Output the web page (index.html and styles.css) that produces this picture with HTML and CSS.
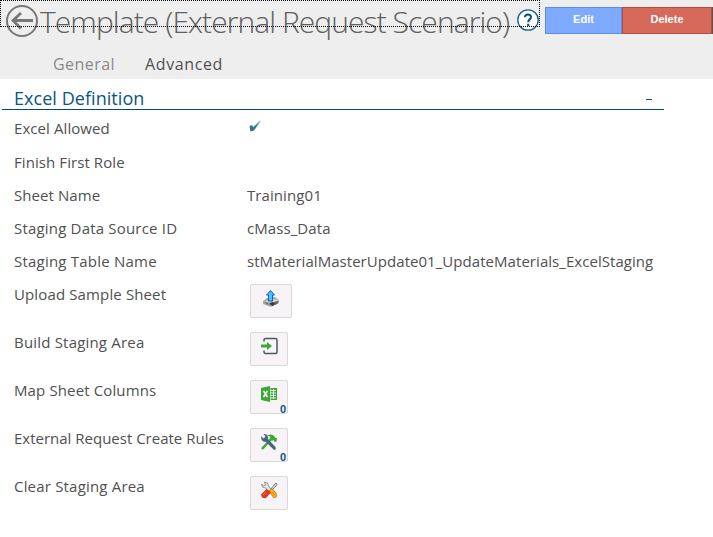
FILE: index.html
```html
<!DOCTYPE html>
<html lang="en">
<head>
<meta charset="utf-8">
<title>Template (External Request Scenario)</title>
<link rel="stylesheet" href="styles.css">
</head>
<body>
<header class="header">
  <div class="topbar">
    <svg class="back" viewBox="0 0 34 34"><circle cx="17" cy="17" r="15" fill="none" stroke="#777" stroke-width="2"/><path d="M28 16.500H8M16 9L8 16.500l8 8" fill="none" stroke="#777" stroke-width="2.8"/></svg>
    <h1 class="title">Template (External Request Scenario)</h1>
    <svg class="help" viewBox="0 0 22 22"><circle cx="11" cy="11" r="10.2" fill="#fff" stroke="#16648c" stroke-width="1.3"/><path d="M8 8.3C8 4.6 14 4.7 14 8.1C14 10.3 11.2 10.5 11.2 13.2M11.2 14.8v2.1" fill="none" stroke="#0b5580" stroke-width="2.1"/></svg>
    <div class="actions"><button class="btn edit">Edit</button><button class="btn delete">Delete</button></div>
    <div class="focus"></div>
  </div>
  <nav class="tabs"><a class="general">General</a><a class="active">Advanced</a></nav>
</header>
<main>
  <div class="section"><h2>Excel Definition</h2><i class="collapse"></i></div>
  <div class="rows">
    <div class="row first"><span class="l1">Excel Allowed</span><svg class="check" viewBox="0 0 12 12"><defs><linearGradient id="ck" x1="0" y1="1" x2="1" y2="0"><stop offset="0" stop-color="#20617f"/><stop offset=".5" stop-color="#4385a1"/><stop offset="1" stop-color="#b9d5ef"/></linearGradient></defs><path d="M.5 6l2.500-1 1.200 2L11 .3l1 1L5 10.500 1.500 11.500z" fill="url(#ck)"/></svg></div>
    <div class="row"><span class="l2">Finish First Role</span></div>
    <div class="row"><span class="l3">Sheet Name</span><span class="v1">Training01</span></div>
    <div class="row"><span class="l4">Staging Data Source ID</span><span class="v2">cMass_Data</span></div>
    <div class="row"><span class="l5">Staging Table Name</span><span class="v3">stMaterialMasterUpdate01_UpdateMaterials_ExcelStaging</span></div>
    <div class="row tall"><span class="l6">Upload Sample Sheet</span><button class="tile wide"><svg viewBox="0 0 18 18"><path d="M1 12l4-3 8-1 4 3v3l-8 4-8-3z" fill="#aaa9a9"/><path d="M2 12l6-1 6-1 3 2-7 2z" fill="#d4d3d0"/><path d="M7 15l3-2 4 1-3 3z" fill="#38364a"/><path d="M12 13l4-1v2l-3 2zM2 13l4 1v2z" fill="#666"/><path d="M8.500 1.500L4.500 6h2v6h4V6h2z" fill="#46c8ff" stroke="#1458cf"/></svg></button></div>
    <div class="row tall"><span class="l7">Build Staging Area</span><button class="tile"><svg viewBox="0 0 18 18"><path d="M4 4.500V3q0-1.500 1.500-1.500h10Q17 1.500 17 3v12q0 1.500-1.500 1.500h-10Q4 16.500 4 15v-1.500" fill="none" stroke="#4d5962" stroke-width="1.500"/><path d="M1 7.500h6V5l5 4-5 4v-2.500H1z" fill="#3aaa35"/></svg></button></div>
    <div class="row tall"><span class="l8">Map Sheet Columns</span><button class="tile"><svg viewBox="0 0 18 18"><path d="M1 3l9-2v16l-9-2z" fill="#3aaa35"/><path d="M3.500 6l4 6M7.500 6l-4 6" stroke="#fff" stroke-width="1.500"/><path d="M10.500 3H17v12h-6.500" fill="#3aaa35"/><path d="M10 5.500h6M10 8h6M10 10.500h6M10 13h6M13.500 4v10" stroke="#f7f3f7" stroke-width=".9"/></svg><b>0</b></button></div>
    <div class="row tall"><span class="l9">External Request Create Rules</span><button class="tile"><svg viewBox="0 0 18 18"><path d="M2 16L11 6" stroke="#3aaa35" stroke-width="2.600"/><path d="M7.500 2.500Q12 0 14.500 3.500l1 1.500 1.500 0-.5 3.500-2 .5-1-2-1.500 1-2.500-2.500 1-1.500z" fill="#3aaa35"/><path d="M1 3l2.500 2.500 2-2L3.500 1q5-.5 4.500 5l7.500 8q1 2.500-1.500 3L6 9Q1 9 1 3z" fill="#4a667e"/></svg><b>0</b></button></div>
    <div class="row tall"><span class="l10">Clear Staging Area</span><button class="tile"><svg viewBox="0 0 18 18"><path d="M10 9l5-6 1-1 1 1-1 2-5 5" fill="#ddd" stroke="#666" stroke-width=".8"/><path d="M1.500 3l2 2 2-1-1-3q4 0 4 4l3 4-2 2-4-4q-4 0-4-4z" fill="#e5e5e5" stroke="#888" stroke-width=".9"/><path d="M9 10l3-2.500L16.500 13q1 4-3 3.500z" fill="#ffab16" stroke="#bd6408" stroke-width=".7"/><path d="M6.500 8.500l4 3-5 5.500q-4 0-4-3.500z" fill="#ed351b" stroke="#ae2615" stroke-width=".7"/><path d="M6 11l-3 3M12 11l3 3" stroke="#ff812d"/></svg></button></div>
  </div>
</main>
</body>
</html>
```
FILE: styles.css
```css
* { box-sizing: border-box; }
body { margin: 0; width: 713px; height: 537px; overflow: hidden; background: #fff; color: #505050; font-family: "Open Sans", "Noto Sans", sans-serif; }
.header { height: 79px; background: #eee; }
.topbar { position: relative; display: flex; height: 50px; padding-left: 5px; }
.back { width: 34px; height: 34px; margin-top: 4px; flex: none; }
.title { margin: 0 0 0 1px; width: 477px; flex: none; font-size: 30px; line-height: 43px; font-weight: 300; color: #606060; white-space: nowrap; letter-spacing: -.93px; }
.help { width: 22px; height: 22px; margin-top: 9px; flex: none; }
.focus { position: absolute; left: 0; top: 0; width: 540px; height: 27px; border: 1px dotted #000; }
.actions { display: flex; margin: 7px 0 0 6px; width: 168px; height: 27px; border-right: 1px solid #555; }
.btn { height: 27px; padding: 0 0 3px; border: 1px solid #5a8de8; background: #7eaaff; color: #fff; font: bold 11px "Liberation Sans", sans-serif; }
.edit { width: 77px; }
.delete { width: 90px; border-color: #b84b40; background: #d7695b; }
.tabs { display: flex; gap: 30px; padding-left: 53px; font-size: 16px; line-height: 29px; letter-spacing: .45px; color: #8a8a8a; }
.active { color: #505050; letter-spacing: .6px; }
.section { display: flex; justify-content: space-between; width: 662px; height: 31px; margin-left: 2px; padding: 7px 12px 0 12px; border-bottom: 1px solid #004b76; }
h2 { margin: 0; font-size: 18px; line-height: 24px; font-weight: 400; color: #0b5580; white-space: nowrap; letter-spacing: .05px; }
.collapse { width: 6px; height: 1px; margin-top: 13px; background: #0b5580; }
.rows { padding: 8px 0 0 14px; }
.row { display: grid; grid-template-columns: 233px 1fr; height: 33px; align-items: start; font-size: 15px; line-height: 20px; white-space: nowrap; }
.row > span { justify-self: start; }
.first { height: 34px; }
.tall { height: 48px; }
.l1, .l2, .l3, .v1, .v2 { letter-spacing: .08px; }
.l4, .l7, .l10 { letter-spacing: .19px; }
.l5 { letter-spacing: .22px; }
.l6, .l8 { letter-spacing: .13px; }
.v3 { letter-spacing: .05px; }
.check { width: 12px; height: 12px; margin: 2px 0 0 2px; }
.tile { position: relative; display: flex; justify-content: center; width: 38px; height: 34px; margin: 0 0 0 3px; padding: 4px 0 0; border: 1px solid #dadada; border-radius: 2px; background: #f7f3f7; }
.wide { width: 42px; }
.tile svg { width: 18px; height: 18px; }
.tile b { position: absolute; right: 1px; bottom: -2px; color: #0b5580; font: bold 11px/12px "Liberation Sans", sans-serif; }
```
